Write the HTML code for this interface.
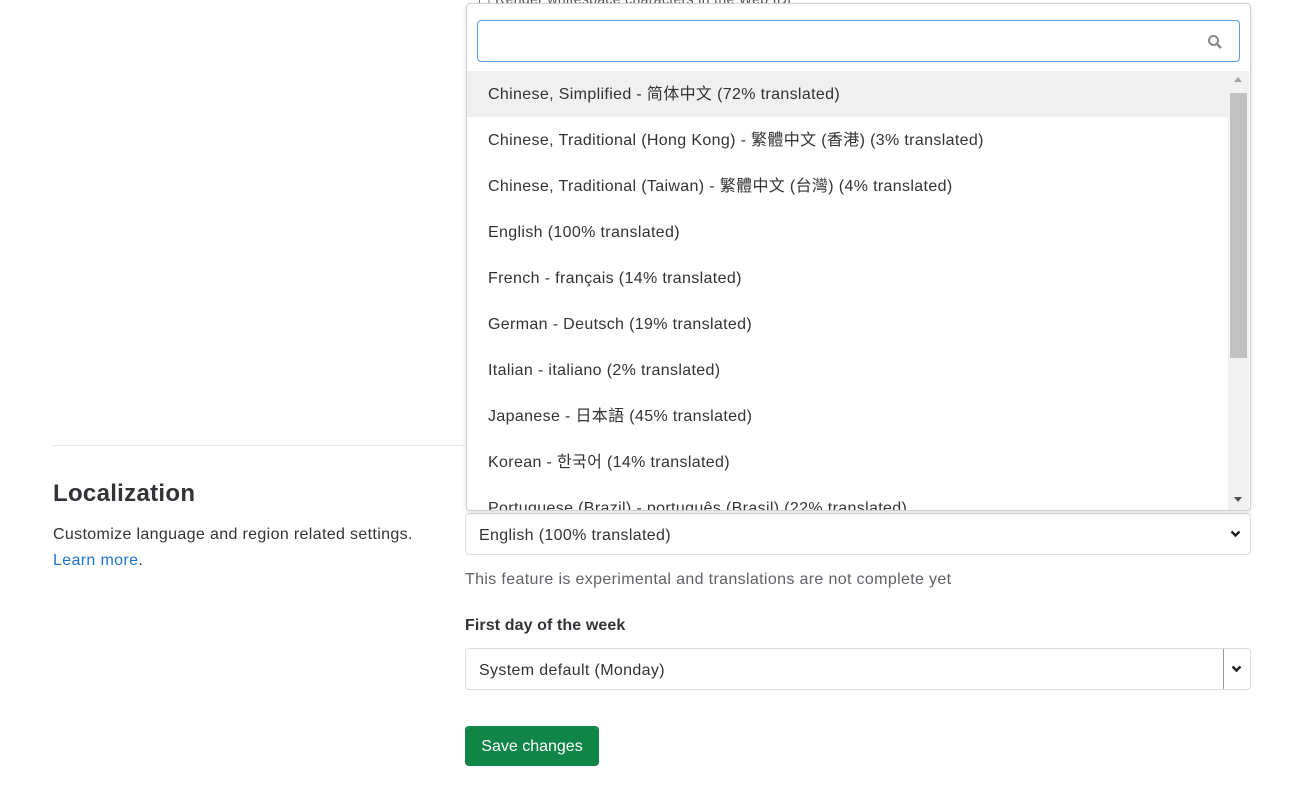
<!DOCTYPE html>
<html><head><meta charset="utf-8"><style>
*{box-sizing:border-box;margin:0;padding:0}
body{width:1299px;height:792px;overflow:hidden;background:#fff;font-family:"Liberation Sans","Noto Sans CJK SC",sans-serif;color:#333238;font-size:16px;letter-spacing:.35px;position:relative}
.abs{position:absolute}
.dd{left:466px;top:3px;width:785px;height:508px;border:1px solid #d0d0d0;border-radius:4px;background:#fff;box-shadow:0 2px 6px rgba(0,0,0,.12);overflow:hidden;z-index:2}
.search{left:10px;top:16px;width:763px;height:42px;border:1px solid #5b9ee0;border-radius:4px}
.item{position:absolute;left:0;width:761px;height:46px;line-height:48px;padding-left:21px;white-space:nowrap;font-size:16px;color:#333}
.sel{position:absolute;left:465px;width:786px;height:42px;border:1px solid #dcdcde;border-radius:4px;line-height:43px;padding-left:13px;font-size:16px;color:#333}
.chev{position:absolute;top:16px}
</style></head><body>
<div class="abs" style="left:478px;top:-9px;font-size:14px;color:#555">☐ Render whitespace characters in the Web IDE</div>
<div class="abs" style="left:53px;top:445px;width:412px;height:1px;background:#e6e6e6"></div>
<div class="abs" style="left:53px;top:480px;font-size:24px;font-weight:bold;letter-spacing:.3px;color:#333238">Localization</div>
<div class="abs" style="left:53px;top:522px;font-size:16px;line-height:26px;color:#333">Customize language and region related settings.<br><span style="color:#1f75cb">Learn more</span>.</div>

<div class="abs dd">
 <div class="abs search"><svg class="abs" style="left:729px;top:13px" width="16" height="16" viewBox="0 0 16 16"><circle cx="6.5" cy="6.5" r="4.5" fill="none" stroke="#888" stroke-width="2"/><path d="M10 10l4 4" stroke="#888" stroke-width="2.5"/></svg></div>
 <div style="position:absolute;top:67px;left:0;width:783px;height:440px;overflow:hidden">
  <div class="item" style="top:0;background:#f0f0f0">Chinese, Simplified - 简体中文 (72% translated)</div>
  <div class="item" style="top:46px">Chinese, Traditional (Hong Kong) - 繁體中文 (香港) (3% translated)</div>
  <div class="item" style="top:92px">Chinese, Traditional (Taiwan) - 繁體中文 (台灣) (4% translated)</div>
  <div class="item" style="top:138px">English (100% translated)</div>
  <div class="item" style="top:184px">French - français (14% translated)</div>
  <div class="item" style="top:230px">German - Deutsch (19% translated)</div>
  <div class="item" style="top:276px">Italian - italiano (2% translated)</div>
  <div class="item" style="top:322px">Japanese - 日本語 (45% translated)</div>
  <div class="item" style="top:368px">Korean - 한국어 (14% translated)</div>
  <div class="item" style="top:414px">Portuguese (Brazil) - português (Brasil) (22% translated)</div>
  <div class="abs" style="left:761px;top:0;width:21px;height:440px;background:#f1f1f1">
   <div class="abs" style="left:6px;top:6px;width:0;height:0;border-left:4px solid transparent;border-right:4px solid transparent;border-bottom:5px solid #a3a3a3"></div>
   <div class="abs" style="left:2px;top:22px;width:17px;height:265px;background:#c1c1c1"></div>
   <div class="abs" style="left:6px;top:426px;width:0;height:0;border-left:4px solid transparent;border-right:4px solid transparent;border-top:5px solid #505050"></div>
  </div>
 </div>
</div>

<div class="sel" style="top:513px">English (100% translated)<svg class="chev" style="right:9px" width="11" height="8" viewBox="0 0 11 8"><path d="M1.5 1.5l4 4 4-4" fill="none" stroke="#222" stroke-width="2.4"/></svg></div>
<div class="abs" style="left:465px;top:571px;font-size:16px;color:#626168">This feature is experimental and translations are not complete yet</div>
<div class="abs" style="left:465px;top:617px;font-size:16px;font-weight:bold;letter-spacing:.1px;color:#333238">First day of the week</div>
<div class="sel" style="top:648px">System default (Monday)<span class="abs" style="right:26px;top:0;width:1px;height:40px;background:#999"></span><svg class="chev" style="right:8px" width="11" height="8" viewBox="0 0 11 8"><path d="M1.5 1.5l4 4 4-4" fill="none" stroke="#222" stroke-width="2.4"/></svg></div>
<div class="abs" style="left:465px;top:726px;width:134px;height:40px;background:#108548;border-radius:4px;color:#fff;font-size:16px;letter-spacing:0;line-height:42px;text-align:center">Save changes</div>
</body></html>
